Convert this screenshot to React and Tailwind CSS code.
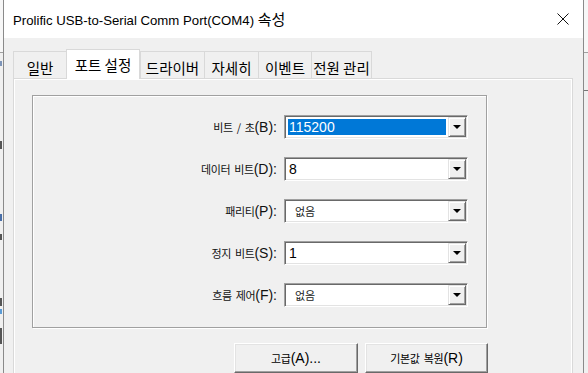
import React from "react";

const KR = "font-['Noto_Sans_CJK_KR',sans-serif]";
const LS = "font-['Liberation_Sans','Noto_Sans_CJK_KR',sans-serif]";

function Lbl({ ko, en }) {
  return (
    <span className="flex items-baseline text-[#111]">
      <span className={`text-[11px] tracking-[-0.4px] [word-spacing:2px] ${KR}`}>{ko}</span>
      <span className={`text-[14px] ${LS}`}>{en}</span>
    </span>
  );
}

function Arrow() {
  return (
    <svg width="8" height="4" viewBox="0 0 8 4">
      <polygon points="0,0 8,0 4,4" fill="#000" />
    </svg>
  );
}

function Combo({ v, sel, kr }) {
  return (
    <div className="w-[184px] h-[24px] flex bg-white border border-t-[#a0a0a0] border-l-[#a0a0a0] border-r-white border-b-white shadow-[inset_1px_1px_0_#696969,inset_-1px_-1px_0_#e3e3e3] p-[1px]">
      <div className="flex-1 flex items-center">
        {sel ? (
          <div className={`mx-[2px] flex-1 h-[16px] bg-[#0078d7] text-white flex items-center pl-[1px] text-[14px] ${LS}`}>
            {v}
          </div>
        ) : kr ? (
          <span className={`pl-[9px] text-[11px] text-[#222] ${KR}`}>{v}</span>
        ) : (
          <span className={`pl-[3px] text-[14px] text-black ${LS}`}>{v}</span>
        )}
      </div>
      <div className="w-[18px] h-full bg-[#f0f0f0] border border-t-[#e3e3e3] border-l-[#e3e3e3] border-r-[#696969] border-b-[#696969] shadow-[inset_1px_1px_0_#fff,inset_-1px_-1px_0_#a0a0a0] flex items-center justify-center">
        <Arrow />
      </div>
    </div>
  );
}

function Btn({ ko, en, w }) {
  return (
    <div
      className={`${w} h-[30px] flex items-center justify-center bg-[#f0f0f0] border border-t-white border-l-white border-r-[#696969] border-b-[#696969] shadow-[inset_-1px_-1px_0_#a0a0a0,inset_1px_1px_0_#e3e3e3]`}
    >
      <span className="flex items-baseline text-black">
        <span className={`text-[11px] tracking-[-0.3px] [word-spacing:2px] ${KR}`}>{ko}</span>
        <span className={`text-[14px] ${LS}`}>{en}</span>
      </span>
    </div>
  );
}

const rows = [
  { ko: "비트 / 초", en: "(B):", v: "115200", sel: true },
  { ko: "데이터 비트", en: "(D):", v: "8" },
  { ko: "패리티", en: "(P):", v: "없음", kr: true },
  { ko: "정지 비트", en: "(S):", v: "1" },
  { ko: "흐름 제어", en: "(F):", v: "없음", kr: true },
];

const tabs = [
  { t: "일반", w: "w-[53px]" },
  { t: "포트 설정", w: "w-[74px]", sel: true },
  { t: "드라이버", w: "w-[64px]" },
  { t: "자세히", w: "w-[54px]" },
  { t: "이벤트", w: "w-[53px]" },
  { t: "전원 관리", w: "w-[61px]", last: true },
];

export default function App() {
  return (
    <div className="w-[588px] h-[373px] overflow-hidden flex bg-[#f0f0f0]">
      {/* background window left */}
      <div className="w-[3px] h-full flex flex-col bg-[#f0f0f0]">
        <div className="h-[52px] bg-[#f7f7f7]" />
        <div className="h-px bg-[#a0a0a0]" />
        <div className="h-[8px]" />
        <div className="h-[5px] w-[2px] bg-[#7d94b8]" />
        <div className="h-[75px]" />
        <div className="h-[8px] w-[2px] bg-[#555]" />
        <div className="h-[65px]" />
        <div className="h-[7px] w-[2px] bg-[#4a6fa8]" />
        <div className="h-[13px]" />
        <div className="h-[6px] w-[2px] bg-[#555]" />
        <div className="h-[58px]" />
        <div className="h-[8px] w-[2px] bg-[#555]" />
        <div className="h-[3px]" />
        <div className="h-[5px] w-[2px] bg-[#5b9bd5]" />
        <div className="h-[14px]" />
        <div className="h-[16px] w-[2px] bg-[#555]" />
      </div>

      {/* dialog */}
      <div className="w-[581px] h-full flex flex-col border-l border-r border-[#8a8a8a]">
        <div className="h-[38px] shrink-0 bg-white flex items-center justify-between pl-[9px] pr-[14px]">
          <span className={`text-[13.2px] text-black ${LS}`}>
            Prolific USB-to-Serial Comm Port(COM4) <span className={`text-[15px] ${KR}`}>속성</span>
          </span>
          <svg width="12" height="12" viewBox="0 0 12 12">
            <path d="M0.5 0.5 L11.5 11.5 M11.5 0.5 L0.5 11.5" stroke="#111" strokeWidth="1" fill="none" />
          </svg>
        </div>

        <div className="flex-1 flex flex-col pt-[11px] pl-[9px]">
          {/* tabs */}
          <div className="h-[30px] flex items-start relative z-10">
            {tabs.map((tab) =>
              tab.sel ? (
                <div
                  key={tab.t}
                  className={`${tab.w} h-[30px] bg-white border-t border-l border-r border-[#d9d9d9] flex justify-center pt-[4px] text-[14.5px] text-black ${KR}`}
                >
                  {tab.t}
                </div>
              ) : (
                <div
                  key={tab.t}
                  className={`${tab.w} h-[27px] mt-[2px] bg-[#f0f0f0] border-t border-[#d9d9d9] ${
                    tab.last ? "border-r" : ""
                  } border-l flex justify-center pt-[5px] text-[14.5px] text-black ${KR}`}
                >
                  {tab.t}
                </div>
              )
            )}
          </div>

          {/* panel */}
          <div className="-mt-px w-[560px] flex-1 bg-[#f0f0f0] border border-[#d9d9d9] shadow-[inset_1px_1px_0_#fff,inset_-1px_0_0_#fff] pt-[16px] pl-[18px]">
            <div className="w-[456px] flex flex-col">
              <div className="w-[455px] h-[233px] border border-[#a0a0a0] shadow-[inset_1px_1px_0_#fff,1px_1px_0_#fff] pt-[19px] pr-[18px] flex flex-col gap-[18px]">
                {rows.map((r) => (
                  <div key={r.ko} className="h-[24px] flex items-center justify-end gap-[7px]">
                    <Lbl ko={r.ko} en={r.en} />
                    <Combo v={r.v} sel={r.sel} kr={r.kr} />
                  </div>
                ))}
              </div>
              <div className="mt-[15px] flex justify-end gap-[7px]">
                <Btn ko="고급" en="(A)..." w="w-[124px]" />
                <Btn ko="기본값 복원" en="(R)" w="w-[123px]" />
              </div>
            </div>
          </div>
        </div>
      </div>

      {/* background window right */}
      <div className="w-[4px] h-full flex flex-col">
        <div className="h-[52px] bg-[#f7f7f7]" />
        <div className="h-px bg-[#a0a0a0]" />
        <div className="h-[37px] bg-[#f0f0f0]" />
        <div className="h-px bg-[#777]" />
        <div className="flex-1 bg-[#f0f0f0]" />
      </div>
    </div>
  );
}
